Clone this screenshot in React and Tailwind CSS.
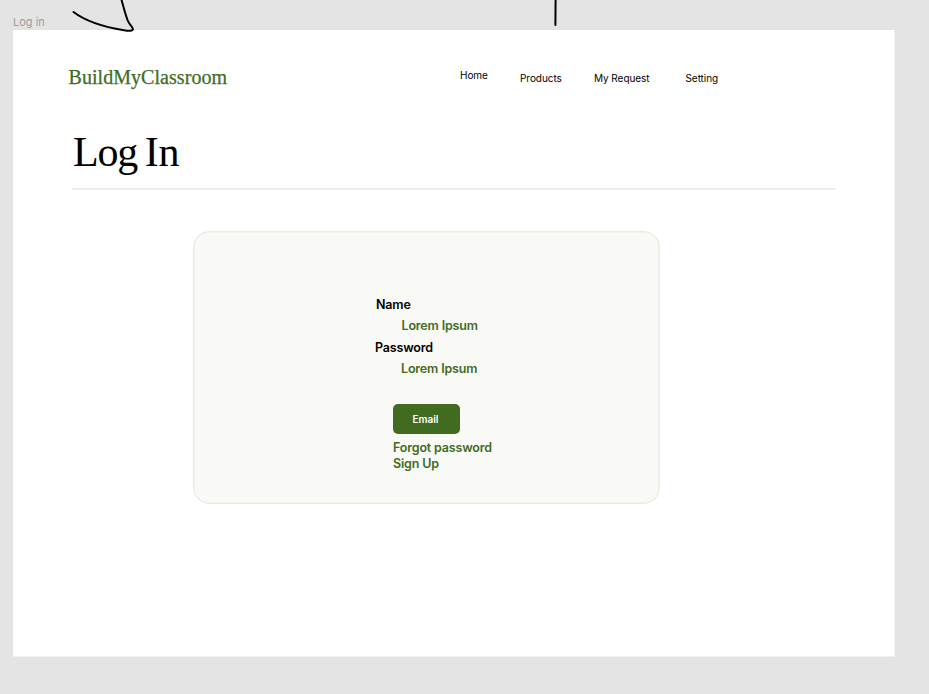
export default function App() {
  return (
    <div className="relative flex h-[694px] w-[929px] flex-col overflow-hidden bg-[#e4e4e4] pl-[13px] font-['Inter',sans-serif] text-black">
      <p className="h-[30px] pt-[14px] text-[11px] leading-4 text-[#9c9c9c]">Log in</p>

      <main className="h-[627px] w-[882px] border-r border-b border-[#f1f1f1] bg-white">
        <header className="flex h-[98px] items-start pt-[35px] pl-[55.5px]">
          <h2 className="w-[391.5px] pt-[1px] font-['Liberation_Serif',serif] text-[20px] leading-[23px] tracking-[0.05px] text-[#416b1f] [-webkit-text-stroke:0.25px_#416b1f]">
            BuildMyClassroom
          </h2>
          <nav className="flex pt-[2px] text-[10px] leading-4 tracking-[-0.05px] whitespace-nowrap">
            <a className="w-[60px]">Home</a>
            <a className="w-[74px] pt-[3px]">Products</a>
            <a className="w-[91.5px] pt-[3px]">My Request</a>
            <a className="pt-[3px]">Setting</a>
          </nav>
        </header>

        <div className="ml-[59px] h-[62px] w-[764px] border-b-2 border-[#ededed]">
          <h1 className="pl-[1px] font-['Liberation_Serif',serif] text-[42px] leading-[48px] tracking-[-1.2px] [word-spacing:-1.5px]">Log <span className="tracking-[-0.3px]">In</span></h1>
        </div>

        <section className="mt-[41px] ml-[180px] flex h-[273px] w-[467px] flex-col rounded-2xl border-[1.5px] border-[#e9ebe5] bg-[#f9faf5] pt-[65px] pl-[181px] text-[12.5px] leading-4 font-semibold tracking-[-0.17px] text-[#416b1f] shadow-[inset_0_0_0_0.5px_#e9ebe5]">
          <label className="pl-[1px] text-black">Name</label>
          <span className="mt-[5px] pl-[26.5px]">Lorem Ipsum</span>
          <label className="mt-[6px] text-black">Password</label>
          <span className="mt-[5px] pl-[26px]">Lorem Ipsum</span>
          <button className="mt-[27px] ml-[18px] flex h-[29.5px] w-[67px] items-center justify-center rounded-[5px] bg-[#416b1f] pr-[2px] text-[10px] tracking-[-0.05px] text-white">
            Email
          </button>
          <a className="mt-[6.5px] ml-[18px]">Forgot password</a>
          <a className="ml-[18px]">Sign Up</a>
        </section>
      </main>

      <svg className="absolute top-0 left-0" width="929" height="34" fill="none" stroke="#000" strokeWidth="2" strokeLinecap="round" strokeLinejoin="round">
        <path d="M73.5 12 C88 23 107 27.500 124 30.200 C131 31.300 134 30.800 132.500 28 C131.500 25.500 129 24 127.500 20 C124.500 12 123 5 121.300 -1" />
        <path d="M555.600 -2 L555.400 25" />
      </svg>
    </div>
  );
}
